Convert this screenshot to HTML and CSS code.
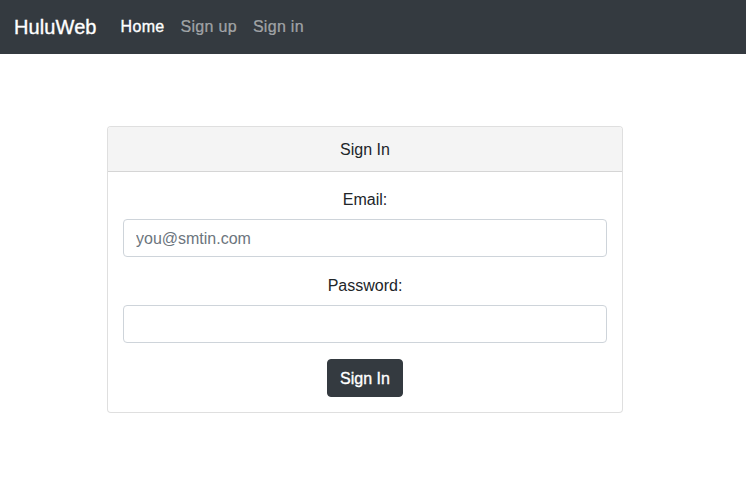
FILE: index.html
```html
<!DOCTYPE html>
<html>
<head>
<meta charset="utf-8">
<link rel="stylesheet" href="styles.css">
</head>
<body>
<nav class="navbar">
  <a class="brand" href="#">HuluWeb</a>
  <ul class="nav">
    <li><a class="nav-link active" href="#">Home</a></li>
    <li><a class="nav-link" href="#">Sign up</a></li>
    <li><a class="nav-link" href="#">Sign in</a></li>
  </ul>
</nav>
<main class="main">
  <div class="card">
    <div class="card-header">Sign In</div>
    <form class="card-body">
      <div class="form-group">
        <label class="label" for="email">Email:</label>
        <input class="input" id="email" type="email" placeholder="you@smtin.com">
      </div>
      <div class="form-group">
        <label class="label" for="pw">Password:</label>
        <input class="input" id="pw" type="password">
      </div>
      <div class="actions">
        <button class="btn" type="button">Sign In</button>
      </div>
    </form>
  </div>
</main>
</body>
</html>
```
FILE: styles.css
```css
* { box-sizing: border-box; }
html, body { margin: 0; padding: 0; }
body {
  font-family: "Liberation Sans", Arial, sans-serif;
  font-size: 16px;
  line-height: 1.5;
  color: #212529;
  background: #fff;
}
.navbar {
  display: flex;
  align-items: center;
  height: 54px;
  padding: 0 16px 0 14px;
  background: #343a40;
}
.brand {
  font-size: 20px;
  line-height: 30px;
  color: #fff;
  text-decoration: none;
  margin-right: 16px;
  letter-spacing: 0.1px;
  -webkit-text-stroke: 0.35px #fff;
}
.nav {
  display: flex;
  list-style: none;
  margin: 0;
  padding: 0;
}
.nav-link {
  display: block;
  padding: 8px 8px;
  color: rgba(255,255,255,.5);
  text-decoration: none;
  line-height: 24px;
  letter-spacing: 0.3px;
  -webkit-text-stroke: 0.2px rgba(255,255,255,.5);
}
.nav-link.active {
  color: #fff;
  -webkit-text-stroke: 0.35px #fff;
}
.main {
  padding-top: 72px;
  padding-left: 107px;
}
.card {
  width: 516px;
  border: 1px solid rgba(0,0,0,.125);
  border-radius: 4px;
  background: #fff;
}
.card-header {
  padding: 11px 16px 9px;
  text-align: center;
  background: #f4f4f4;
  border-bottom: 1px solid rgba(0,0,0,.125);
  border-radius: 3px 3px 0 0;
  line-height: 24px;
}
.card-body {
  padding: 15px;
  margin: 0;
}
.form-group {
  margin-bottom: 16px;
  text-align: center;
}
.label {
  display: block;
  line-height: 24px;
  padding-top: 1px;
  margin-bottom: 7px;
}
.input {
  display: block;
  width: 100%;
  height: 38px;
  padding: 7px 12px 5px;
  font-family: inherit;
  font-size: 16px;
  color: #495057;
  border: 1px solid #ced4da;
  border-radius: 4px;
  background: #fff;
}
.input::placeholder { color: #6c757d; opacity: 1; }
.actions {
  display: flex;
  justify-content: center;
}
.btn {
  height: 38px;
  padding: 7px 12px 5px;
  font-family: inherit;
  font-size: 16px;
  line-height: 24px;
  color: #fff;
  background: #343a40;
  border: 1px solid #343a40;
  border-radius: 4px;
  -webkit-text-stroke: 0.35px #fff;
}
```
